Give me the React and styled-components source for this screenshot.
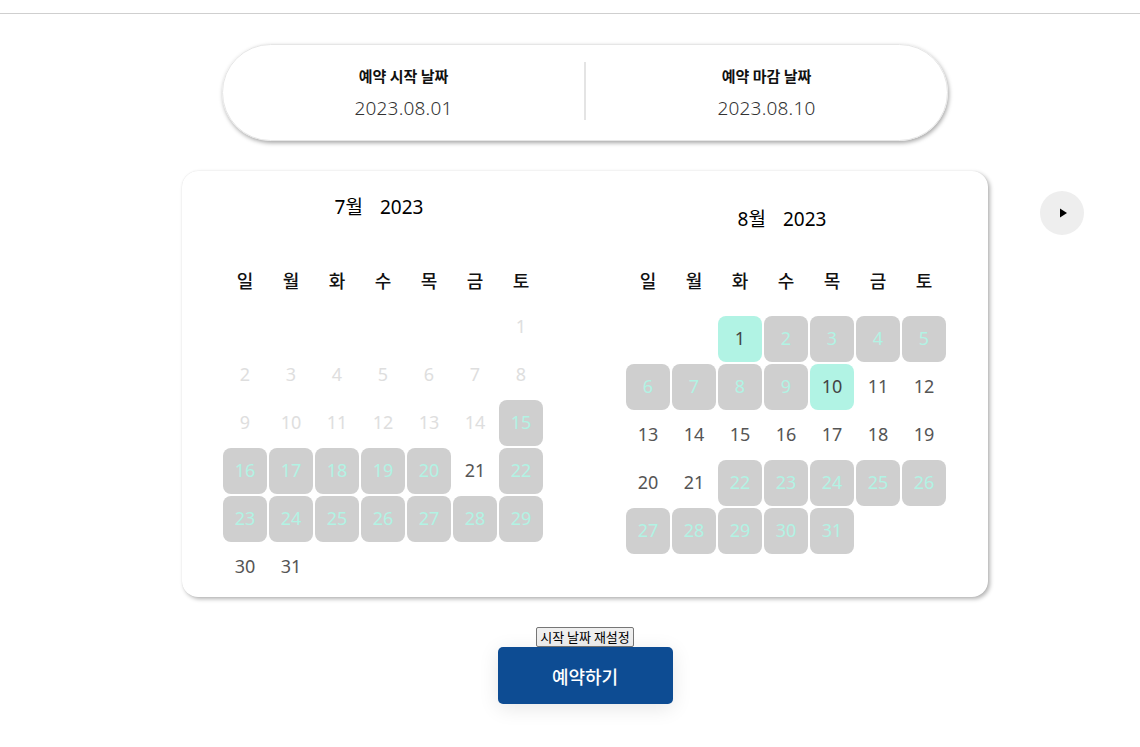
import React from "react";
import styled, { createGlobalStyle } from "styled-components";

const GlobalStyle = createGlobalStyle`
  body {
    margin: 0;
    background: #fff;
    font-family: "Noto Sans", "Noto Sans CJK KR", sans-serif;
  }
`;

const WEEKDAYS = ["일", "월", "화", "수", "목", "금", "토"];

// status: off (before today), free, taken (gray), picked (mint)
const july = {
  title: "7월",
  year: "2023",
  lead: 6,
  days: Array.from({ length: 31 }, (_, i) => {
    const d = i + 1;
    if (d <= 14) return { d, s: "off" };
    if (d === 21 || d >= 30) return { d, s: "free" };
    return { d, s: "taken" };
  }),
};

const august = {
  title: "8월",
  year: "2023",
  lead: 2,
  days: Array.from({ length: 31 }, (_, i) => {
    const d = i + 1;
    if (d === 1 || d === 10) return { d, s: "picked" };
    if (d <= 9 || d >= 22) return { d, s: "taken" };
    return { d, s: "free" };
  }),
};

export default function App() {
  return (
    <>
      <GlobalStyle />
      <TopBar />
      <Main>
        <RangeBox>
          <RangeHalf>
            <RangeLabel>예약 시작 날짜</RangeLabel>
            <RangeDate>2023.08.01</RangeDate>
          </RangeHalf>
          <Divider />
          <RangeHalf>
            <RangeLabel>예약 마감 날짜</RangeLabel>
            <RangeDate>2023.08.10</RangeDate>
          </RangeHalf>
        </RangeBox>

        <CalendarCard>
          <Month month={july} $top={24} $titleGap={49} $gridGap={12} />
          <Month month={august} $top={36} $titleGap={37} $gridGap={24} />
          <NextButton aria-label="next month">
            <svg width="10" height="10" viewBox="0 0 10 10">
              <path d="M2 0.5 L9 5 L2 9.5 Z" fill="#000" />
            </svg>
          </NextButton>
        </CalendarCard>

        <ResetButton>시작 날짜 재설정</ResetButton>
        <ReserveButton>예약하기</ReserveButton>
      </Main>
    </>
  );
}

function Month({ month, $top, $titleGap, $gridGap }) {
  return (
    <MonthBox $top={$top}>
      <MonthTitle>
        {month.title}
        <Year>{month.year}</Year>
      </MonthTitle>
      <Grid $mt={$titleGap}>
        {WEEKDAYS.map(w => (
          <Weekday key={w}>{w}</Weekday>
        ))}
      </Grid>
      <Grid $mt={$gridGap} $rows>
        {Array.from({ length: month.lead }, (_, i) => (
          <span key={"e" + i} />
        ))}
        {month.days.map(day => (
          <Day key={day.d} $s={day.s}>
            {day.d}
          </Day>
        ))}
      </Grid>
    </MonthBox>
  );
}

const TopBar = styled.div`
  height: 13px;
  border-bottom: 1px solid #cfcfcf;
`;

const Main = styled.main`
  padding-left: 30px;
  padding-bottom: 40px;
  display: flex;
  flex-direction: column;
  align-items: center;
`;

const RangeBox = styled.div`
  margin-top: 30px;
  width: 726px;
  height: 97px;
  box-sizing: border-box;
  border: 1px solid #e6e6e6;
  border-radius: 49px;
  box-shadow: 1px 2px 4px rgba(0, 0, 0, 0.35);
  display: flex;
  align-items: center;
`;

const RangeHalf = styled.div`
  flex: 1;
  display: flex;
  flex-direction: column;
  align-items: center;
`;

const RangeLabel = styled.div`
  font-family: "Noto Sans CJK KR", sans-serif;
  font-weight: 700;
  font-size: 15px;
  line-height: 20px;
  color: #111;
`;

const RangeDate = styled.div`
  margin-top: 11px;
  font-family: "Noto Sans", sans-serif;
  font-weight: 300;
  font-size: 19px;
  line-height: 22px;
  letter-spacing: 0.2px;
  color: #333;
`;

const Divider = styled.div`
  width: 2px;
  height: 58px;
  background: #e4e4e4;
  margin-top: -4px;
`;

const CalendarCard = styled.section`
  position: relative;
  margin-top: 30px;
  width: 806px;
  box-sizing: border-box;
  padding: 0 42px 7px 41px;
  border-radius: 16px;
  background: #fff;
  box-shadow: 2px 2px 4px rgba(0, 0, 0, 0.3), 0 0 1px rgba(0, 0, 0, 0.12);
  display: flex;
  justify-content: space-between;
  align-items: flex-start;
`;

const MonthBox = styled.div`
  padding-top: ${p => p.$top}px;
  display: flex;
  flex-direction: column;
  align-items: center;
`;

const MonthTitle = styled.div`
  font-family: "Noto Sans", "Noto Sans CJK KR", sans-serif;
  font-size: 19px;
  line-height: 24px;
  color: #000;
  margin-left: -8px;
`;

const Year = styled.span`
  margin-left: 17px;
`;

const Grid = styled.div`
  margin-top: ${p => p.$mt}px;
  display: grid;
  grid-template-columns: repeat(7, 44px);
  grid-auto-rows: ${p => (p.$rows ? "46px" : "24px")};
  column-gap: 2px;
  row-gap: 2px;
`;

const Weekday = styled.div`
  font-family: "Noto Sans CJK KR", sans-serif;
  font-weight: 500;
  font-size: 18px;
  line-height: 24px;
  text-align: center;
  color: #111;
`;

const dayColors = {
  off: { bg: "transparent", fg: "#dedede" },
  free: { bg: "transparent", fg: "#555" },
  taken: { bg: "#cfcfcf", fg: "#b2f3e4" },
  picked: { bg: "#b1f3e4", fg: "#444" },
};

const Day = styled.div`
  display: flex;
  align-items: center;
  justify-content: center;
  padding-bottom: 3px;
  box-sizing: border-box;
  border-radius: 8px;
  font-family: "Noto Sans", sans-serif;
  font-size: 18px;
  background: ${p => dayColors[p.$s].bg};
  color: ${p => dayColors[p.$s].fg};
`;

const NextButton = styled.button`
  position: absolute;
  top: 20px;
  left: 858px;
  width: 44px;
  height: 44px;
  border: none;
  border-radius: 50%;
  background: #eee;
  display: flex;
  align-items: center;
  justify-content: center;
  padding: 0 0 0 2px;
  cursor: pointer;
`;

const ResetButton = styled.button`
  margin-top: 30px;
  font-family: "Noto Sans CJK KR", sans-serif;
  font-size: 13px;
  line-height: 16px;
  padding: 1px 3px;
  color: #000;
  background: #efefef;
  border: 1px solid #767676;
  border-radius: 2px;
`;

const ReserveButton = styled.button`
  width: 175px;
  height: 57px;
  border: none;
  border-radius: 5px;
  background: #0d4c93;
  color: #fff;
  font-family: "Noto Sans CJK KR", sans-serif;
  font-weight: 500;
  font-size: 18px;
  box-shadow: 0 4px 20px rgba(0, 0, 0, 0.1);
  cursor: pointer;
`;
